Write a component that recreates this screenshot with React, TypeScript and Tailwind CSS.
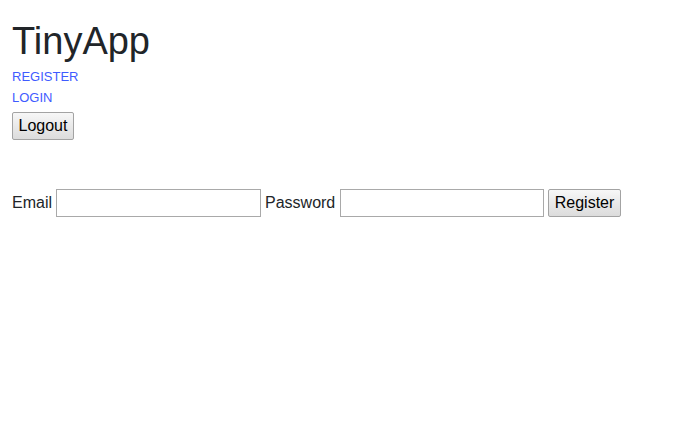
export default function App() {
  return (
    <div className="min-h-[445px] w-full bg-white px-[12px] pt-[17px] text-[16px] text-[#212529] font-['Liberation_Sans',Arial,sans-serif]">
      <h1 className="text-[38px] leading-[48px] font-normal text-[#212529]">TinyApp</h1>
      <div className="mt-[1px] text-[13px] leading-[21px]">
        <a href="#" className="block w-fit text-[#3f5bff]">REGISTER</a>
        <a href="#" className="block w-fit text-[#3f5bff]">LOGIN</a>
      </div>
      <button className="mt-[4px] h-[28px] rounded-[2px] border border-[#a3a3a3] bg-linear-to-b from-[#f7f7f7] to-[#dcdcdc] px-[5.5px] text-[16px] leading-[18px] text-black">
        Logout
      </button>
      <form className="mt-[49px] flex items-center gap-[4px]" onSubmit={(e) => e.preventDefault()}>
        <label className="leading-[18px]">Email</label>
        <input
          type="text"
          className="h-[28px] w-[205px] border border-[#a9a9a9] bg-white px-[2px] text-[13px] outline-none"
        />
        <label className="mr-[1px] leading-[18px]">Password</label>
        <input
          type="password"
          className="h-[28px] w-[204px] border border-[#a9a9a9] bg-white px-[2px] text-[13px] outline-none"
        />
        <button
          type="submit"
          className="h-[28px] rounded-[2px] border border-[#a3a3a3] bg-linear-to-b from-[#f7f7f7] to-[#dcdcdc] px-[5.5px] text-[16px] leading-[18px] text-black"
        >
          Register
        </button>
      </form>
    </div>
  );
}
